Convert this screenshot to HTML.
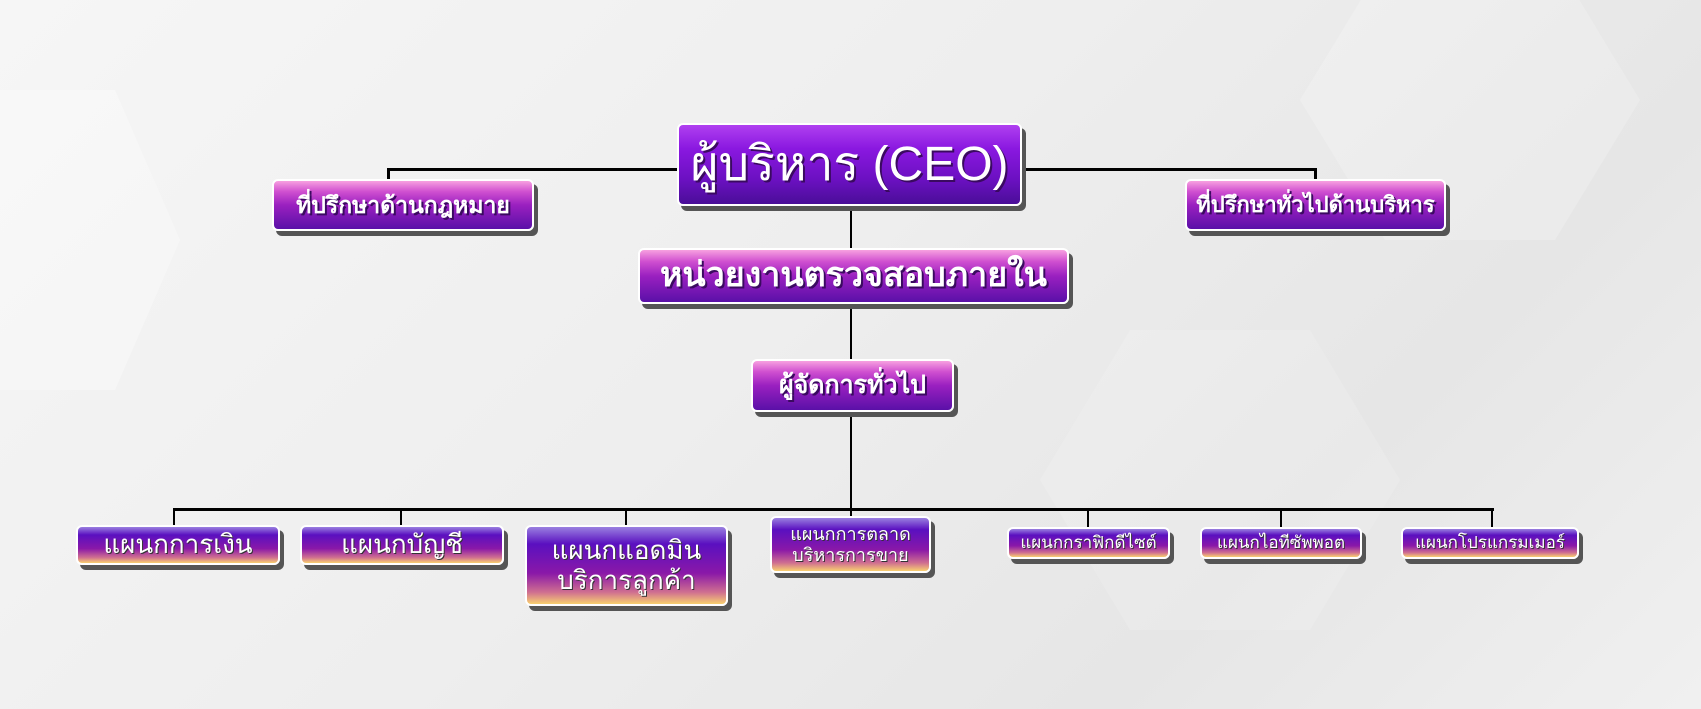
<!DOCTYPE html>
<html><head><meta charset="utf-8"><style>
body{margin:0;width:1701px;height:709px;overflow:hidden;position:relative;
background:linear-gradient(135deg,#f6f6f6 0%,#eeeeee 45%,#e6e6e6 75%,#f0f0f0 100%);
font-family:"Liberation Sans","DejaVu Sans",sans-serif;}
.hex{position:absolute;background:rgba(255,255,255,0.3);clip-path:polygon(25% 0,75% 0,100% 50%,75% 100%,25% 100%,0 50%);}
.l{position:absolute;background:#000;}
.b{position:absolute;box-sizing:border-box;border:2px solid #fff;border-radius:6px;color:#fff;display:flex;align-items:center;justify-content:center;text-align:center;
box-shadow:4px 5px 0 #555;text-shadow:2px 2px 0 #3a0a60;font-weight:bold;line-height:1.15}
.t{background:linear-gradient(#f7a0e0 0%,#d050d0 22%,#9a20c0 50%,#5a10a8 100%);}
.c{background:linear-gradient(#b040f0 0%,#8a18e0 30%,#6a10c0 70%,#4a0e98 100%);}
.d{background:linear-gradient(#9a80e0 0%,#5a10c0 22%,#8a18a8 60%,#d07090 85%,#f8d070 100%);text-shadow:1px 1px 0 #333;font-weight:normal}
</style></head><body>
<div class="hex" style="left:-80px;top:90px;width:260px;height:300px"></div>
<div class="hex" style="left:1300px;top:-40px;width:340px;height:280px;background:rgba(255,255,255,0.2)"></div>
<div class="hex" style="left:1040px;top:330px;width:360px;height:300px;background:rgba(255,255,255,0.15)"></div>

<div class="l" style="left:387px;top:168px;width:290px;height:3px"></div>
<div class="l" style="left:387px;top:168px;width:3px;height:12px"></div>
<div class="l" style="left:1022px;top:168px;width:295px;height:3px"></div>
<div class="l" style="left:1314px;top:168px;width:3px;height:12px"></div>
<div class="l" style="left:850px;top:206px;width:2px;height:310px"></div>
<div class="l" style="left:174px;top:508px;width:1320px;height:3px"></div>
<div class="l" style="left:173px;top:508px;width:2px;height:18px"></div>
<div class="l" style="left:400px;top:508px;width:2px;height:18px"></div>
<div class="l" style="left:625px;top:508px;width:2px;height:18px"></div>
<div class="l" style="left:1087px;top:508px;width:2px;height:20px"></div>
<div class="l" style="left:1280px;top:508px;width:2px;height:20px"></div>
<div class="l" style="left:1491px;top:508px;width:2px;height:20px"></div>

<div class="b c" style="left:677px;top:123px;width:345px;height:83px;font-size:48px;font-weight:normal">ผู้บริหาร (CEO)</div>
<div class="b t" style="left:272px;top:179px;width:262px;height:52px;font-size:23px">ที่ปรึกษาด้านกฎหมาย</div>
<div class="b t" style="left:1185px;top:179px;width:261px;height:52px;font-size:22px">ที่ปรึกษาทั่วไปด้านบริหาร</div>
<div class="b t" style="left:638px;top:248px;width:431px;height:56px;font-size:34px">หน่วยงานตรวจสอบภายใน</div>
<div class="b t" style="left:751px;top:359px;width:203px;height:53px;font-size:25px">ผู้จัดการทั่วไป</div>

<div class="b d" style="left:76px;top:525px;width:204px;height:40px;font-size:26px">แผนกการเงิน</div>
<div class="b d" style="left:300px;top:525px;width:204px;height:40px;font-size:26px">แผนกบัญชี</div>
<div class="b d" style="left:525px;top:525px;width:203px;height:81px;font-size:26px">แผนกแอดมิน<br>บริการลูกค้า</div>
<div class="b d" style="left:770px;top:516px;width:161px;height:57px;font-size:18px">แผนกการตลาด<br>บริหารการขาย</div>
<div class="b d" style="left:1007px;top:527px;width:163px;height:32px;font-size:17px">แผนกกราฟิกดีไซต์</div>
<div class="b d" style="left:1200px;top:527px;width:162px;height:32px;font-size:17px">แผนกไอทีซัพพอต</div>
<div class="b d" style="left:1401px;top:527px;width:178px;height:32px;font-size:17px">แผนกโปรแกรมเมอร์</div>
</body></html>
